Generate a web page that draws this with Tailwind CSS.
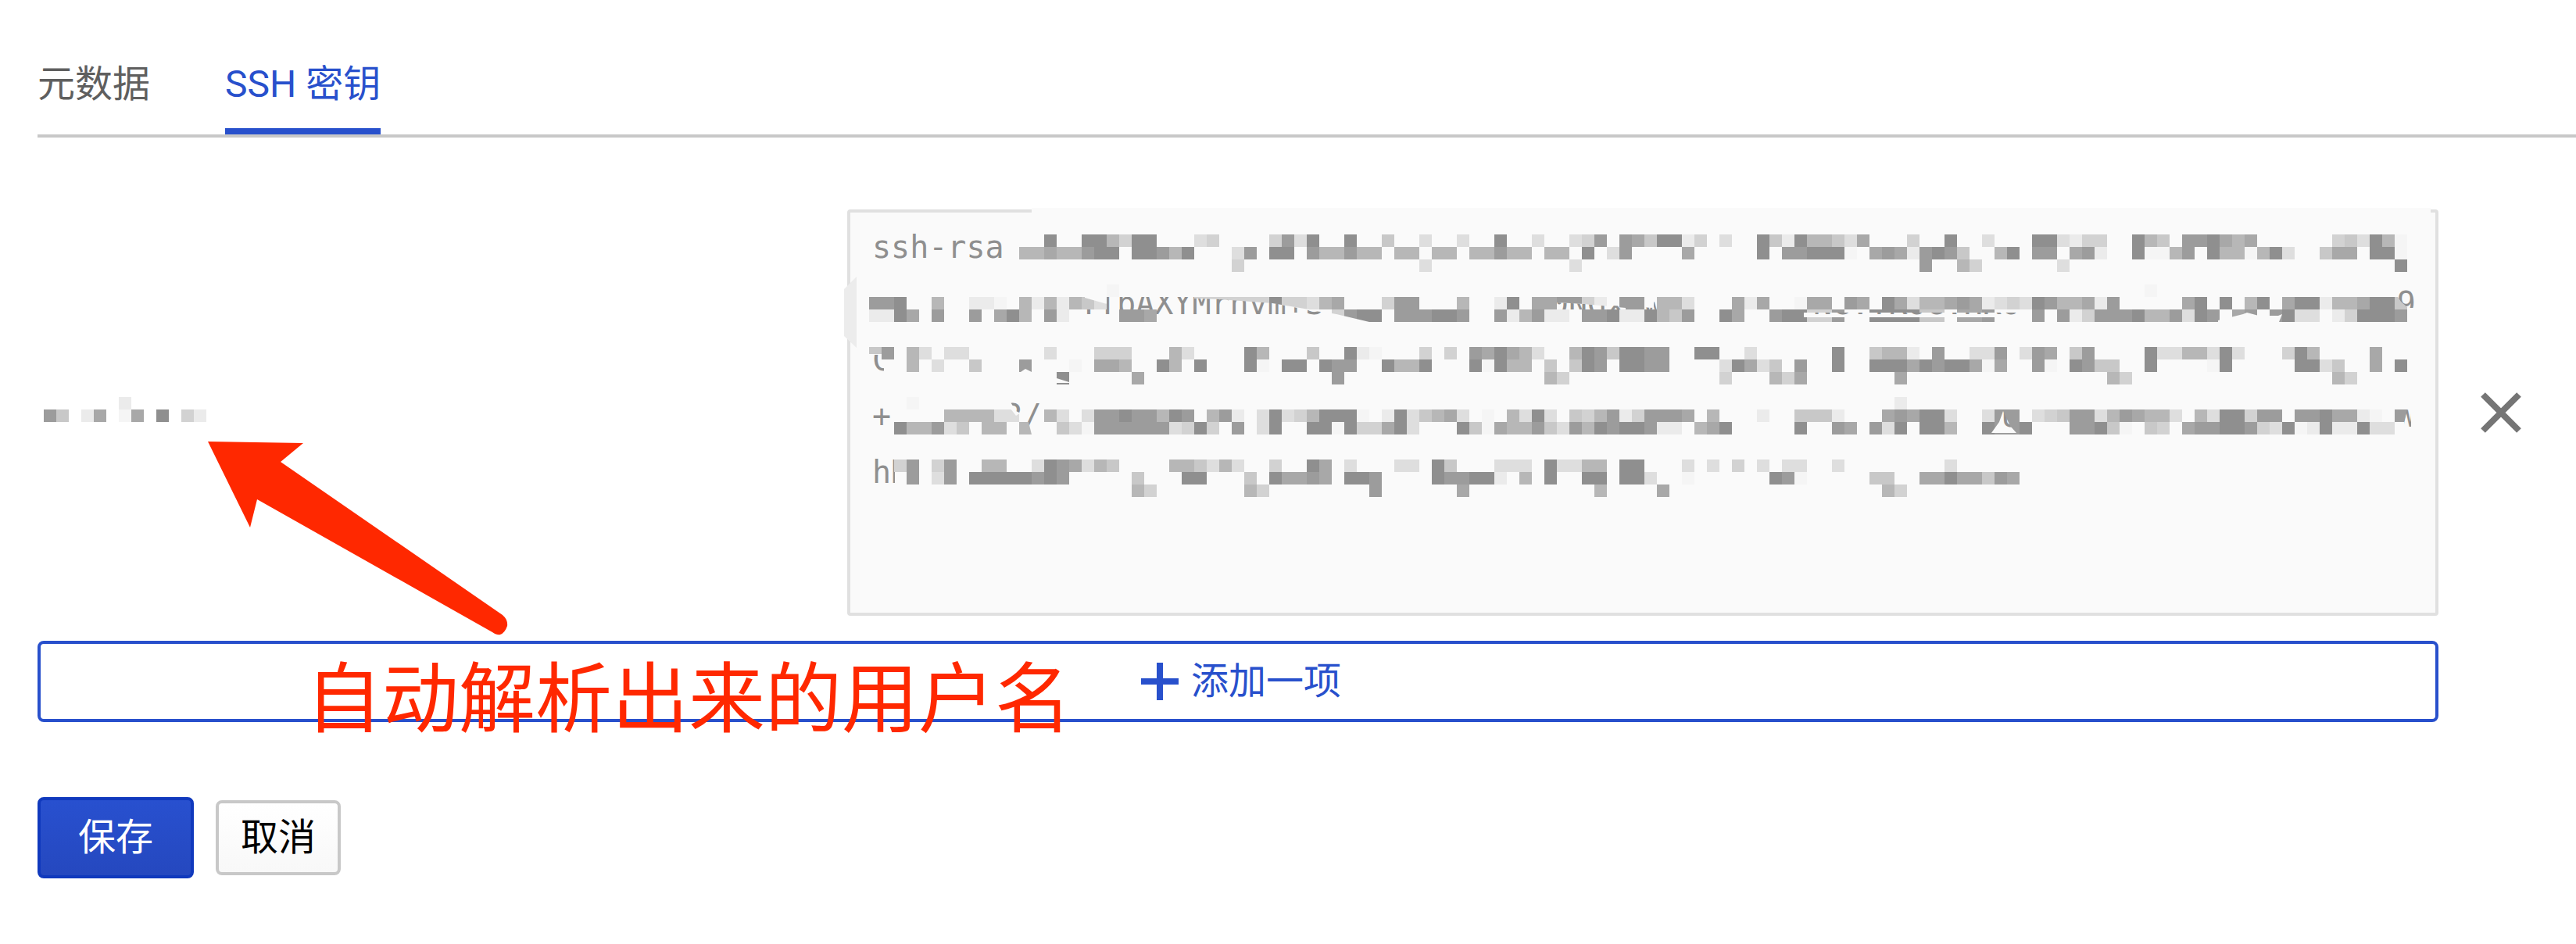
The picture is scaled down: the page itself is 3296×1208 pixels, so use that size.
<!DOCTYPE html>
<html lang="zh-CN">
<head>
<meta charset="utf-8">
<meta name="viewport" content="width=device-width, initial-scale=1">
<title>SSH 密钥</title>
<script src="https://cdn.jsdelivr.net/npm/@tailwindcss/browser@4"></script>
</head>
<body class="bg-white font-[Roboto,'Noto_Sans_CJK_SC',sans-serif] text-5xl/[72px] text-black">
<main class="relative overflow-hidden pt-18 pb-[84px] pl-12">

  <nav class="flex gap-24 border-b-4 border-[#c8c8c8]" aria-label="元数据与密钥">
    <a href="#metadata" class="border-b-8 border-transparent pb-5 text-[#5f5f5f]">元数据</a>
    <a href="#ssh" aria-current="page" class="border-b-8 border-[#2850cc] pb-5 text-[#2850cc]">SSH 密钥</a>
  </nav>

  <form class="mt-[92px]">
    <div class="grid grid-cols-[minmax(0,1036fr)_minmax(0,2036fr)_176px] items-center">
      <div class="pt-2 pl-2">
        <svg id="user" class="block h-12 w-[208px]" viewBox="0 0 208 48" shape-rendering="crispEdges" role="img" aria-label="用户名（已打码）"></svg>
      </div>

      <div class="relative">
        <textarea id="key" aria-label="SSH 密钥" readonly spellcheck="false" class="block h-[520px] w-full resize-none overflow-hidden rounded-sm border-4 border-[#e0e0e0] bg-[#fafafa] px-6 py-2 pl-7 font-['DejaVu_Sans_Mono',monospace] text-[40px]/[72px] whitespace-pre text-[#8f8f8f] outline-none"></textarea>
        <svg class="pointer-events-none absolute -top-1 -left-1 h-[528px] w-[2044px]" viewBox="1080 264 2044 528" aria-hidden="true">
          <mask id="scratches" maskUnits="userSpaceOnUse" x="1080" y="264" width="2044" height="528">
            <path fill="#fff" d="M1080 264h2044v528H1080z"/>
            <path fill="#000" d="M1388 381l28 8v-9h-28zM1528 382l32 1 68 5 82 14 42 10h-224zM1992 387l35 2 53 5v2h-88zM2308 400h262v6h-262zM2838 410l32-8 5-2 15 4h25l5-2-4 10h-78zM3064 374h17v20l-9-8zM1112 453h16v7h-16zM1306 476l6-4 8 4zM1352 484l16 5v1h-16zM1286 514h20v14l-6 4zM1316 540h4v16zM2548 554l10-14 5-14 9 19 8 9zM3081 520l-7 28h10z"/>
          </mask>
          <path fill="#fafafa" d="M1320 266h1790v8H1320z"/>
          <path fill="#ececec" d="M1096 354v91l-16-15v-60z"/>
          <path fill="#fafafa" d="M1372 360h340v20h-296v9l-44-8zM1372 376h28v14h-28zM1620 380h100v22l-40-4-60-12zM1976 360h140v34l-124-7v9h124v16h-140zM2300 360h290v40h-290zM3056 360h12v52h-12zM3068 394h20v18h-20zM1112 440h32v14h-32zM1131 440h16v44h-16zM1282 510h8l10 16 8 4v20h-26zM2550 510h36v16h-36zM3056 506h20v50h-20zM3085 506h10v50h-10zM1145 580h26v50h-26z"/>
          <g id="blocks" mask="url(#scratches)" shape-rendering="crispEdges"></g>
        </svg>
      </div>

      <button type="button" aria-label="删除" class="ml-[54px] w-[52px]">
        <svg class="block size-[52px]" viewBox="0 0 52 52" fill="none" stroke="#757575" stroke-width="8"><path d="M3 3l46 46M49 3L3 49"/></svg>
      </button>
    </div>

    <button type="button" class="mt-8 mr-44 flex h-[104px] w-[calc(100%-176px)] items-center justify-center gap-4 rounded-lg border-4 border-[#2850cc] pl-2 text-[#2850cc]">
      <svg class="size-12" viewBox="0 0 48 48" fill="none" stroke="currentColor" stroke-width="8"><path d="M24 0v48M0 24h48"/></svg>
      <span>添加一项</span>
    </button>

    <div class="mt-24 flex items-center gap-7">
      <button type="submit" class="h-[104px] rounded-lg border-4 border-[#1039bd] bg-linear-to-b from-[#2850cf] to-[#2548bf] px-12 text-white">保存</button>
      <button type="button" class="h-24 rounded-lg border-4 border-[#c8c8c8] bg-linear-to-b from-white to-[#f8f8f8] px-7">取消</button>
    </div>
  </form>

  <svg class="pointer-events-none absolute top-[564px] left-[264px] h-[252px] w-[390px]" viewBox="264 564 390 252" aria-hidden="true">
    <path fill="#ff2800" d="M266 565L388 567 359 591 643 787Q650 793 649 801 646 810 640 812 636 813 630 809L329 639 320 675Z"/>
  </svg>
  <p class="pointer-events-none absolute top-[824px] left-[391px] text-[98px]/[144px] whitespace-nowrap text-[#ff2800]">自动解析出来的用户名</p>
</main>

<script>
const gap = n => ' '.repeat(n);
document.getElementById('key').value = [
  'ssh-rsa',
  gap(11) + 'YTbAXYMrnvm+S' + gap(12) + '0NGxRw' + gap(8) + 'NG.TKOG.HKO' + gap(20) + '9',
  'C',
  '+' + gap(6) + '2/' + gap(51) + 'U' + gap(20) + 'W',
  'hN'
].join('\n');

// Each run is "column:shades"; a shade is 1 (faint) to 9 (dark).
const shades = ['', '#f5f5f5', '#ebebeb', '#dedede', '#d2d2d2', '#c8c8c8', '#b7b7b7', '#a8a8a8', '#9c9c9c', '#8f8f8f'];
function pixelate(target, left, rows) {
  for (const [y, runs] of Object.entries(rows)) {
    for (const run of runs.split(' ')) {
      const [start, cells] = run.split(':');
      [...cells].forEach((shade, i) => {
        const r = document.createElementNS('http://www.w3.org/2000/svg', 'rect');
        r.setAttribute('x', left + (Number(start) + i) * 16);
        r.setAttribute('y', y);
        r.setAttribute('width', 16);
        r.setAttribute('height', 16);
        r.setAttribute('fill', shades[shade]);
        target.append(r);
      });
    }
  }
}
pixelate(document.getElementById('user'), 0, { 0: '6:2', 16: '0:85 3:27 6:17 9:9 11:42' });
pixelate(document.getElementById('blocks'), 1112, {
  300: '14:9 17:996499 26:34 32:4839 38:9 41:5 44:3 47:3 50:9 53:3 56:348 60:8759924 68:3 71:952966537 83:4 86:9 89:3 93:993244 101:965 105:889767 117:453961',
  316: '12:66766899 21:99869 29:38 32:99 35:866866 42:66 45:66 48:66866 54:66 57:9 59:38 65:7 71:9 73:889991 80:78728985 90:69 93:88 96:782 101:91168 107:9661693 116:577 120:991',
  332: '29:4 44:3 56:3 84:8 87:64 95:3 122:9',
  364: '19:1 102:1',
  380: '0:889 5:6 8:221 12:6262653 26:444444944367 41:488 47:6 50:29 53:778842 60:88 63:663 69:727 74:177 78:87 81:9736678723439866728 105:79 108:9 110:69 113:7992667995',
  396: '0:2297 5:8 8:8 10:796 14:82 20:887 37:4899 42:888998 50:826822 57:889229658 68:97 72:899448 80:999955 87:778 93:8 95:8248889668398 109:78 112:8933 117:249998',
  444: '0:58 3:63 6:33 14:3 18:444 24:63 30:96 35:5 38:921 44:4 46:4 48:879763 56:69859988 66:99 70:3 77:9 80:5662 85:8 88:338 92:387 96:58 102:93366393 113:496 120:7',
  460: '3:6 5:3 8:5 12:8 16:1 18:776 23:96 26:9 30:91 33:99 36:988 41:9669 48:91966 54:5 56:598 60:9988 68:39735 74:8 77:9 80:99979899717 93:81 96:9855 102:9 107:19 114:9935 120:7 122:9',
  476: '15:9 21:7 37:8 54:64 68:4 72:647 82:7 99:64 117:64',
  508: '3:1 82:2',
  524: '6:666633 14:63 17:388988698 27:682 31:393469991 41:2935673 49:1 51:6393 56:5468248887 67:6 71:2 74:5552 81:787993 89:388 93:345883687663 106:6399488 114:8897721 122:8',
  540: '2:966835 9:66 12:6 15:5318888883494 29:8 31:39 35:991944793 47:951766853869899822 66:679 74:9 77:87 80:839 84:996 89:9889 96:88951 102:54 105:78899843912922933',
  588: '2:48 5:48 9:66 13:3987365 24:665363 32:4 35:97 38:3 42:33 45:95 50:333 54:93366 60:99 65:3 67:3 69:4 71:3 73:33 77:3 86:3',
  604: '3:8 5:38 8:99999898 21:5 25:99 30:5 32:97787 38:998 45:988992 52:6 54:9 57:99 60:993 65:1 72:981 80:55 84:77977587',
  620: '21:64 30:64 40:8 47:7 58:6 63:7 81:64'
});
</script>
</body>
</html>
